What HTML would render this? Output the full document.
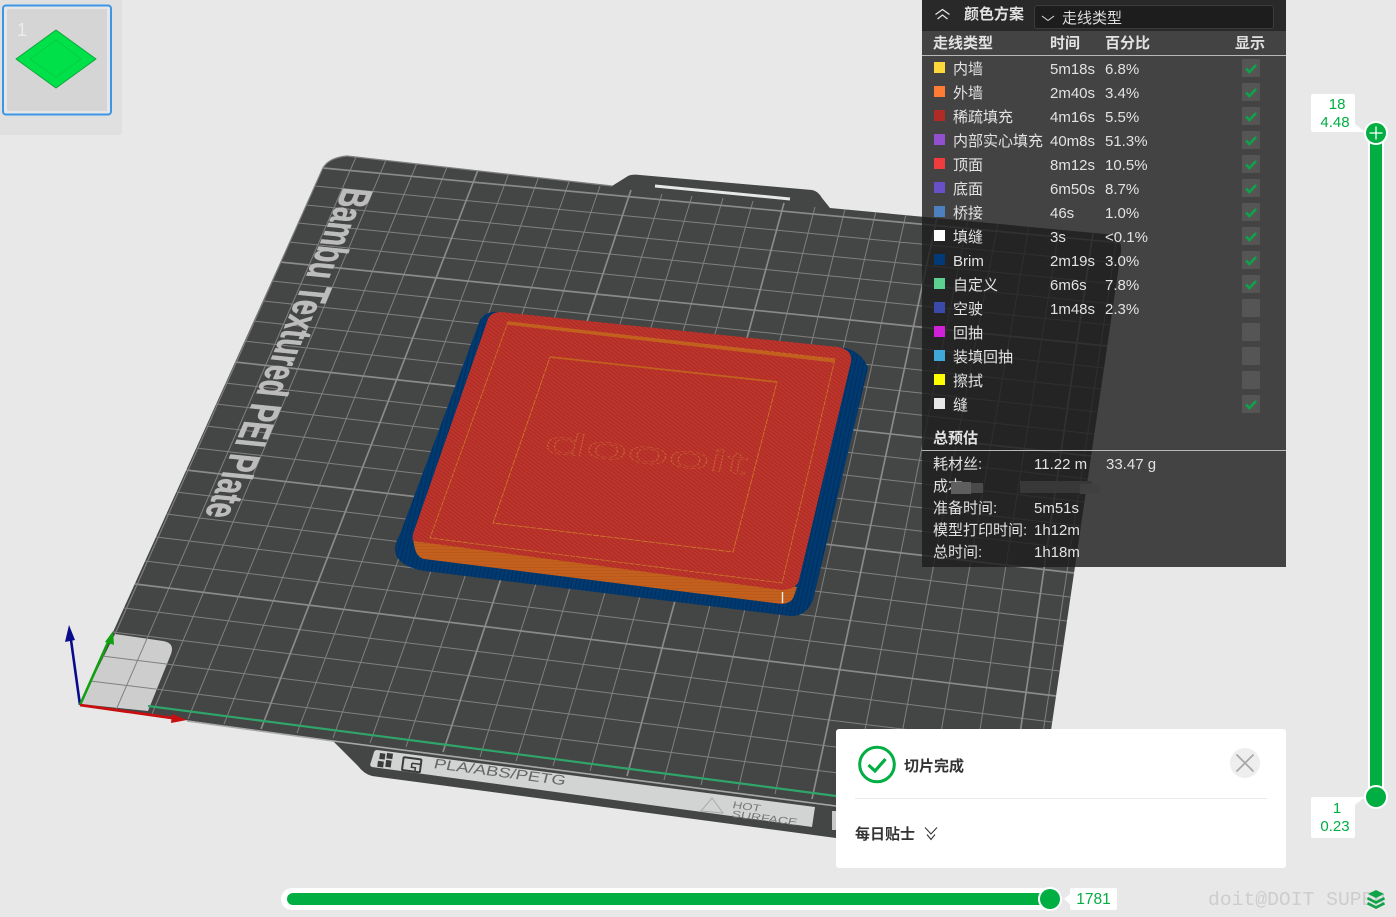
<!DOCTYPE html>
<html lang="zh">
<head>
<meta charset="utf-8">
<title>切片预览</title>
<style>
html,body{margin:0;padding:0}
body{width:1396px;height:917px;overflow:hidden;background:#e8e8e8;position:relative;font-family:"Liberation Sans","Noto Sans CJK SC",sans-serif;font-size:15px;color:#e2e2e2}
#scene{position:absolute;left:0;top:0}
.abs{position:absolute;white-space:nowrap}
#panel{position:absolute;left:922px;top:0;width:364px;height:567px;background:rgba(28,28,28,.81)}
#ptop{position:absolute;left:0;top:0;width:364px;height:31px;background:rgba(10,10,10,.45)}
#dd{position:absolute;left:112px;top:5px;width:238px;height:22px;background:#1d1d1d;border:1px solid #3c3c3c;border-radius:3px}
.t{position:absolute;white-space:nowrap;line-height:24px;height:24px;transform:translateY(2px)}
.t.u{transform:translateY(1px)}
.b{font-weight:700}
.sw{position:absolute;left:12px;width:11px;height:11px}
.cb{position:absolute;left:320px;width:18px;height:18px;background:#555}
.cb svg{position:absolute;left:0;top:0}
#toast{position:absolute;left:836px;top:729px;width:450px;height:139px;background:#fff;border-radius:3px}
.tip{position:absolute;background:#fff;color:#00ae42;border-radius:2px;text-align:center;font-size:15px;line-height:18px}
</style>
</head>
<body>
<svg id="scene" width="1396" height="917" viewBox="0 0 1396 917" xmlns="http://www.w3.org/2000/svg">
<defs>
<pattern id="red" width="3" height="3" patternUnits="userSpaceOnUse" patternTransform="rotate(38)">
<rect width="3" height="3" fill="#bf352b"/><rect width="3" height="1" fill="#a82c27"/>
</pattern>
<pattern id="org" width="3" height="3" patternUnits="userSpaceOnUse">
<rect width="3" height="3" fill="#c4601e"/><rect width="3" height="1" fill="#bb5a1c"/>
</pattern>
<pattern id="navy" width="4" height="4" patternUnits="userSpaceOnUse" patternTransform="rotate(12)">
<rect width="4" height="4" fill="#003a70"/><rect width="1" height="4" fill="#002f5f"/>
</pattern>
<clipPath id="plateclip"><path d="M347 156L612 186Q620 181 628 176Q632 174 640 175L812 190Q818 191 822 198L830 208L1105 234Q1123 236 1121 252L1037 826L836 838L372 776Q364 774 358 766L333 741L80 705L322 170Q327 158 347 156Z"/></clipPath>
</defs>

<!-- thumbnail -->
<path d="M0 0H122V132Q122 135 119 135H0Z" fill="#e0e0e0"/>
<rect x="3" y="5.500" width="108" height="109" rx="3" fill="#e6e6e6" stroke="#3b97e6" stroke-width="2"/>
<rect x="7" y="9" width="100" height="102" fill="#d5d5d5"/>
<path d="M56 30L96 59L56 88L16 59Z" fill="#00e048" stroke="#0aa83a" stroke-width="1" stroke-linejoin="round"/>
<path d="M56 40L81 59L56 77L30 59Z" fill="none" stroke="#0cc440" stroke-width=".6"/>
<text x="17" y="36" font-family="Liberation Sans" font-size="18" fill="#ececec">1</text>

<!-- plate -->
<path d="M347 156L612 186Q620 181 628 176Q632 174 640 175L812 190Q818 191 822 198L830 208L1105 234Q1123 236 1121 252L1037 826L836 838L372 776Q364 774 358 766L333 741L80 705L322 170Q327 158 347 156Z" fill="#444545"/>
<path d="M115 634L163 641Q175 643 171 654L148 711L80 704Z" fill="#cdcdcd"/>
<path d="M655 186L790 199" stroke="#e8e8e8" stroke-width="3" fill="none"/>

<g clip-path="url(#plateclip)">
<!-- grid minor -->
<path fill="none" stroke="#808080" stroke-width="1" d="M356 157L116 710M386 160L152 714M417 163L188 719M447 167L224 724M509 173L297 733M539 176L333 738M570 179L370 743M600 186L406 747M662 194L480 757M692 196L516 761M723 198L553 766M753 201L590 771M815 207L664 780M845 209L701 785M876 211L738 790M906 214L775 794M968 220L850 804M998 223L888 808M1029 226L927 813M1059 230L966 818M1117 236L1029 827
M315 186L1119 263M306 205L1116 284M298 223L1113 304M289 242L1110 325M272 281L1104 368M263 301L1101 389M253 321L1097 412M244 341L1094 434M225 383L1088 479M216 404L1084 502M206 426L1081 526M196 448L1077 549M176 492L1070 597M166 514L1067 621M156 537L1063 646M145 561L1060 671M124 608L1052 722M113 632L1049 747M102 656L1045 773M90 681L1041 798"/>
<!-- grid major -->
<path fill="none" stroke="#8a8a8a" stroke-width="1.700" d="M478 170L261 729M631 190L443 752M784 203L627 776M937 217L812 799M1093 233L1007 823
M323 168L1122 243M280 262L1107 346M235 362L1091 456M186 470L1074 573M135 584L1056 696"/>
</g>
<!-- plate edge -->
<path d="M187 721L333 741L836 806" stroke="#a8a8a8" stroke-width="1.600" fill="none"/>
<path d="M322 170Q327 158 347 156L612 186M115 634L322 170" stroke="#7e7e7e" stroke-width="1.200" fill="none"/>
<!-- green line -->
<path d="M148 706L440 744L836 796" stroke="#2fa56a" stroke-width="2.200" fill="none"/>

<!-- bed label strip -->
<path d="M377 750L815 807L812 827L372 767Q369 766 371 762L374 752Q375 750 377 750Z" fill="#d2d4d4"/>
<path d="M832 811L836 811L836 830L832 830Z" fill="#c8c8c8"/>
<g transform="translate(380 753) rotate(7.500)">
<rect x="0" y="0" width="5.500" height="6" fill="#3a3a3a"/><rect x="7" y="-1" width="6" height="5.500" fill="#3a3a3a"/><rect x="-1" y="8" width="6" height="6" fill="#3a3a3a"/><rect x="7" y="6" width="5.500" height="7" fill="#3a3a3a"/>
<rect x="24" y="1" width="18" height="13" rx="1" fill="none" stroke="#3a3a3a" stroke-width="2"/>
<path d="M33 6H42M33 6V10H37V14" stroke="#3a3a3a" stroke-width="1.500" fill="none"/>
</g>
<text transform="matrix(.99 .13 -.25 .97 433 768)" font-family="Liberation Sans" font-size="14" fill="#666" textLength="133" lengthAdjust="spacingAndGlyphs">PLA/ABS/PETG</text>
<path d="M701 811L712 798L723 813Z" fill="none" stroke="#aaa" stroke-width="1"/>
<text transform="matrix(.99 .13 -.25 .97 732 808)" font-family="Liberation Sans" font-size="10" fill="#777" textLength="28" lengthAdjust="spacingAndGlyphs">HOT</text>
<text transform="matrix(.99 .13 -.25 .97 731 817)" font-family="Liberation Sans" font-size="10" fill="#777" textLength="66" lengthAdjust="spacingAndGlyphs">SURFACE</text>

<!-- plate name -->
<text transform="matrix(-.39 .92 -1.420 -.14 344 187)" font-family="Liberation Sans" font-weight="700" font-size="30" fill="#bcbcbc" stroke="#bcbcbc" stroke-width=".5" textLength="358" lengthAdjust="spacingAndGlyphs">Bambu Textured PEI Plate</text>

<!-- axes -->
<path d="M80 705L71 640" stroke="#0a0a8c" stroke-width="2.600" fill="none"/>
<path d="M69 625L65 642L75 640Z" fill="#0a0a8c"/>
<path d="M80 705L109 640" stroke="#11a011" stroke-width="2.600" fill="none"/>
<path d="M113 631L105 642L114 645Z" fill="#11a011"/>
<path d="M80 705L172 718" stroke="#c80f0f" stroke-width="2.800" fill="none"/>
<path d="M187 720L172 714L171 723Z" fill="#c80f0f"/>

<!-- print: brim -->
<path d="M480 320Q486 311 497 312L845 348Q862 352 868 368L813 600Q806 617 790 616L425 571Q396 566 395 550Q395 543 400 534Z" fill="url(#navy)"/>
<!-- print: sides -->
<path d="M413 540L415 549Q417 557 424 559L782 604Q792 603 794 596L797 587Z" fill="url(#org)"/>
<!-- print: top -->
<path d="M488 319Q491 312 501 312L838 347Q853 350 851 362L799 580Q797 589 782 590L413 541Q412 536 414 531Z" fill="url(#red)"/>
<!-- print: inner contours -->
<path d="M508 322L835 359L782 583L430 538Z" fill="none" stroke="#cb7a2a" stroke-width=".8" stroke-dasharray="5 1"/>
<path d="M508 323L835 361" stroke="#c2601e" stroke-width="3.400" fill="none"/>
<path d="M550 357L777 382L733 552L493 523Z" fill="none" stroke="#cf7c2a" stroke-width=".8" stroke-dasharray="6 1"/>
<path d="M550 357L777 382" stroke="#c2601e" stroke-width="1.800" fill="none"/>
<text transform="matrix(1 .11 -.22 1 543 452)" font-family="Liberation Sans" font-size="30" fill="none" stroke="#d4863a" stroke-opacity=".6" stroke-width=".45" stroke-dasharray="2 1" textLength="202" lengthAdjust="spacingAndGlyphs">doooit</text>
<path d="M782.500 592V603" stroke="#f4f0ea" stroke-width="1.400"/>
</svg>

<!-- layer panel -->
<div id="panel">
<div id="ptop"></div>
<svg class="abs" style="left:12px;top:8px" width="17" height="13" viewBox="0 0 17 13"><path d="M1.500 6.500L8.500 1.500L15.500 6.500M3.500 11L8.500 7L13.500 11" fill="none" stroke="#e8e8e8" stroke-width="1.200"/></svg>
<span class="t b u" style="left:42px;top:2px">颜色方案</span>
<div id="dd">
<svg class="abs" style="left:6px;top:9px" width="14" height="7" viewBox="0 0 14 7"><path d="M1 1L7 5.500L13 1" fill="none" stroke="#ddd" stroke-width="1"/></svg>
<span class="t u" style="left:27px;top:0;color:#ddd">走线类型</span>
</div>

<span class="t b" style="left:11px;top:30px">走线类型</span>
<span class="t b" style="left:128px;top:30px">时间</span>
<span class="t b" style="left:183px;top:30px">百分比</span>
<span class="t b" style="left:313px;top:30px">显示</span>
<div class="abs" style="left:0;top:55px;width:364px;height:1px;background:#b8b8b8"></div>

<div class="sw" style="top:62px;background:#ffd83c"></div><span class="t" style="left:31px;top:56px">内墙</span><span class="t" style="left:128px;top:56px">5m18s</span><span class="t" style="left:183px;top:56px">6.8%</span>
<div class="cb" style="top:59px"><svg width="18" height="18" viewBox="0 0 18 18"><path d="M4 9.500L7.500 13L14 6" fill="none" stroke="#0fa34a" stroke-width="2.600"/></svg></div>

<div class="sw" style="top:86px;background:#ff7c34"></div><span class="t" style="left:31px;top:80px">外墙</span><span class="t" style="left:128px;top:80px">2m40s</span><span class="t" style="left:183px;top:80px">3.4%</span>
<div class="cb" style="top:83px"><svg width="18" height="18" viewBox="0 0 18 18"><path d="M4 9.500L7.500 13L14 6" fill="none" stroke="#0fa34a" stroke-width="2.600"/></svg></div>

<div class="sw" style="top:110px;background:#b02a26"></div><span class="t" style="left:31px;top:104px">稀疏填充</span><span class="t" style="left:128px;top:104px">4m16s</span><span class="t" style="left:183px;top:104px">5.5%</span>
<div class="cb" style="top:107px"><svg width="18" height="18" viewBox="0 0 18 18"><path d="M4 9.500L7.500 13L14 6" fill="none" stroke="#0fa34a" stroke-width="2.600"/></svg></div>

<div class="sw" style="top:134px;background:#9050d0"></div><span class="t" style="left:31px;top:128px">内部实心填充</span><span class="t" style="left:128px;top:128px">40m8s</span><span class="t" style="left:183px;top:128px">51.3%</span>
<div class="cb" style="top:131px"><svg width="18" height="18" viewBox="0 0 18 18"><path d="M4 9.500L7.500 13L14 6" fill="none" stroke="#0fa34a" stroke-width="2.600"/></svg></div>

<div class="sw" style="top:158px;background:#f03c3c"></div><span class="t" style="left:31px;top:152px">顶面</span><span class="t" style="left:128px;top:152px">8m12s</span><span class="t" style="left:183px;top:152px">10.5%</span>
<div class="cb" style="top:155px"><svg width="18" height="18" viewBox="0 0 18 18"><path d="M4 9.500L7.500 13L14 6" fill="none" stroke="#0fa34a" stroke-width="2.600"/></svg></div>

<div class="sw" style="top:182px;background:#6a50c8"></div><span class="t" style="left:31px;top:176px">底面</span><span class="t" style="left:128px;top:176px">6m50s</span><span class="t" style="left:183px;top:176px">8.7%</span>
<div class="cb" style="top:179px"><svg width="18" height="18" viewBox="0 0 18 18"><path d="M4 9.500L7.500 13L14 6" fill="none" stroke="#0fa34a" stroke-width="2.600"/></svg></div>

<div class="sw" style="top:206px;background:#4d80c0"></div><span class="t" style="left:31px;top:200px">桥接</span><span class="t" style="left:128px;top:200px">46s</span><span class="t" style="left:183px;top:200px">1.0%</span>
<div class="cb" style="top:203px"><svg width="18" height="18" viewBox="0 0 18 18"><path d="M4 9.500L7.500 13L14 6" fill="none" stroke="#0fa34a" stroke-width="2.600"/></svg></div>

<div class="sw" style="top:230px;background:#ffffff"></div><span class="t" style="left:31px;top:224px">填缝</span><span class="t" style="left:128px;top:224px">3s</span><span class="t" style="left:183px;top:224px">&lt;0.1%</span>
<div class="cb" style="top:227px"><svg width="18" height="18" viewBox="0 0 18 18"><path d="M4 9.500L7.500 13L14 6" fill="none" stroke="#0fa34a" stroke-width="2.600"/></svg></div>

<div class="sw" style="top:254px;background:#003a78"></div><span class="t" style="left:31px;top:248px">Brim</span><span class="t" style="left:128px;top:248px">2m19s</span><span class="t" style="left:183px;top:248px">3.0%</span>
<div class="cb" style="top:251px"><svg width="18" height="18" viewBox="0 0 18 18"><path d="M4 9.500L7.500 13L14 6" fill="none" stroke="#0fa34a" stroke-width="2.600"/></svg></div>

<div class="sw" style="top:278px;background:#5cd090"></div><span class="t" style="left:31px;top:272px">自定义</span><span class="t" style="left:128px;top:272px">6m6s</span><span class="t" style="left:183px;top:272px">7.8%</span>
<div class="cb" style="top:275px"><svg width="18" height="18" viewBox="0 0 18 18"><path d="M4 9.500L7.500 13L14 6" fill="none" stroke="#0fa34a" stroke-width="2.600"/></svg></div>

<div class="sw" style="top:302px;background:#3a4aa8"></div><span class="t" style="left:31px;top:296px">空驶</span><span class="t" style="left:128px;top:296px">1m48s</span><span class="t" style="left:183px;top:296px">2.3%</span>
<div class="cb" style="top:299px"></div>

<div class="sw" style="top:326px;background:#d020d8"></div><span class="t" style="left:31px;top:320px">回抽</span>
<div class="cb" style="top:323px"></div>

<div class="sw" style="top:350px;background:#40a8d8"></div><span class="t" style="left:31px;top:344px">装填回抽</span>
<div class="cb" style="top:347px"></div>

<div class="sw" style="top:374px;background:#ffff00"></div><span class="t" style="left:31px;top:368px">擦拭</span>
<div class="cb" style="top:371px"></div>

<div class="sw" style="top:398px;background:#e8e8e8"></div><span class="t" style="left:31px;top:392px">缝</span>
<div class="cb" style="top:395px"><svg width="18" height="18" viewBox="0 0 18 18"><path d="M4 9.500L7.500 13L14 6" fill="none" stroke="#0fa34a" stroke-width="2.600"/></svg></div>

<span class="t b" style="left:11px;top:425px">总预估</span>
<div class="abs" style="left:0;top:450px;width:364px;height:1px;background:#b8b8b8"></div>

<span class="t" style="left:11px;top:451px">耗材丝:</span><span class="t" style="left:112px;top:451px">11.22 m</span><span class="t" style="left:184px;top:451px">33.47 g</span>
<span class="t" style="left:11px;top:473px">成本</span>
<div class="abs" style="left:29px;top:482px;width:20px;height:12px;background:#5e5e5e"></div>
<div class="abs" style="left:49px;top:483px;width:12px;height:10px;background:#4a4a4a"></div>
<div class="abs" style="left:98px;top:481px;width:72px;height:12px;background:#383838"></div>
<div class="abs" style="left:158px;top:484px;width:20px;height:10px;background:#404040"></div>
<span class="t" style="left:11px;top:495px">准备时间:</span><span class="t" style="left:112px;top:495px">5m51s</span>
<span class="t" style="left:11px;top:517px">模型打印时间:</span><span class="t" style="left:112px;top:517px">1h12m</span>
<span class="t" style="left:11px;top:539px">总时间:</span><span class="t" style="left:112px;top:539px">1h18m</span>
</div>

<!-- toast -->
<div id="toast">
<svg class="abs" style="left:21px;top:16px" width="40" height="40" viewBox="0 0 40 40"><circle cx="20" cy="19.500" r="17.300" fill="none" stroke="#00ae42" stroke-width="3"/><path d="M11.500 20L18 26L28.500 14" fill="none" stroke="#00ae42" stroke-width="3.200"/></svg>
<span class="abs b" style="left:68px;top:27px;line-height:22px;color:#333">切片完成</span>
<svg class="abs" style="left:394px;top:19px" width="30" height="30" viewBox="0 0 30 30"><circle cx="15" cy="15" r="15" fill="#eeeeee"/><path d="M6.500 6.500L23.500 23.500M23.500 6.500L6.500 23.500" stroke="#a8a8a8" stroke-width="1.800"/></svg>
<div class="abs" style="left:19px;top:69px;width:412px;height:1px;background:#eaeaea"></div>
<span class="abs b" style="left:19px;top:95px;line-height:22px;color:#333">每日贴士</span>
<svg class="abs" style="left:88px;top:97px" width="14" height="15" viewBox="0 0 14 15"><path d="M1 1.500L7 8L13 1.500M3 8.500L7 13.500L11 8.500" fill="none" stroke="#333" stroke-width="1.100"/></svg>
</div>

<!-- vertical slider -->
<div class="abs" style="left:1368px;top:133px;width:16px;height:664px;background:#fff"></div>
<div class="abs" style="left:1370px;top:133px;width:12px;height:664px;background:#00ae42"></div>
<svg class="abs" style="left:1363px;top:120px" width="26" height="26" viewBox="0 0 26 26"><circle cx="13" cy="13" r="12" fill="#fff"/><circle cx="13" cy="13" r="10" fill="#00ae42"/><path d="M13 6.500V19.500M6.500 13H19.500" stroke="#fff" stroke-width="1.300"/></svg>
<svg class="abs" style="left:1364px;top:785px" width="24" height="24" viewBox="0 0 24 24"><circle cx="12" cy="12" r="12" fill="#fff"/><circle cx="12" cy="12" r="10" fill="#00ae42"/></svg>
<div class="tip" style="left:1311px;top:94px;width:44px;height:38px;padding:2px 0 0 4px;box-sizing:border-box">&nbsp;18<br>4.48</div>
<svg class="abs" style="left:1355px;top:124px" width="12" height="10" viewBox="0 0 12 10"><path d="M0 0L10 8L0 8Z" fill="#fff"/></svg>
<div class="tip" style="left:1311px;top:797px;width:44px;height:41px;padding:3px 0 0 4px;box-sizing:border-box">&nbsp;1<br>0.23</div>
<svg class="abs" style="left:1355px;top:797px" width="12" height="10" viewBox="0 0 12 10"><path d="M0 8L10 0L0 0Z" fill="#fff"/></svg>

<!-- horizontal slider -->
<div class="abs" style="left:281px;top:888px;width:781px;height:22px;background:#fff;border-radius:11px"></div>
<div class="abs" style="left:287px;top:893px;width:760px;height:12px;background:#00ae42;border-radius:6px 0 0 6px"></div>
<svg class="abs" style="left:1038px;top:887px" width="24" height="24" viewBox="0 0 24 24"><circle cx="12" cy="12" r="12" fill="#fff"/><circle cx="12" cy="12" r="10" fill="#00ae42"/></svg>
<div class="tip" style="left:1070px;top:888px;width:47px;height:22px;line-height:23px;font-size:15.500px">1781</div>
<svg class="abs" style="left:1063px;top:893px" width="8" height="12" viewBox="0 0 8 12"><path d="M8 0L1 6L8 12Z" fill="#fff"/></svg>

<!-- watermark -->
<span class="abs" style="left:1208px;top:888px;font-family:'Liberation Mono',monospace;font-size:19.700px;line-height:24px;color:#cdcdcd">doit@DOIT SUPER</span>
<svg class="abs" style="left:1366px;top:889px" width="20" height="21" viewBox="0 0 20 21"><path d="M10 1L18 5L10 9L2 5Z" fill="#0fa34a"/><path d="M2 8L10 12L18 8L19 10.500L10 15L1 10.500Z" fill="#0fa34a"/><path d="M2 13L10 17L18 13L19 15.500L10 20L1 15.500Z" fill="#0fa34a"/></svg>
</body>
</html>
